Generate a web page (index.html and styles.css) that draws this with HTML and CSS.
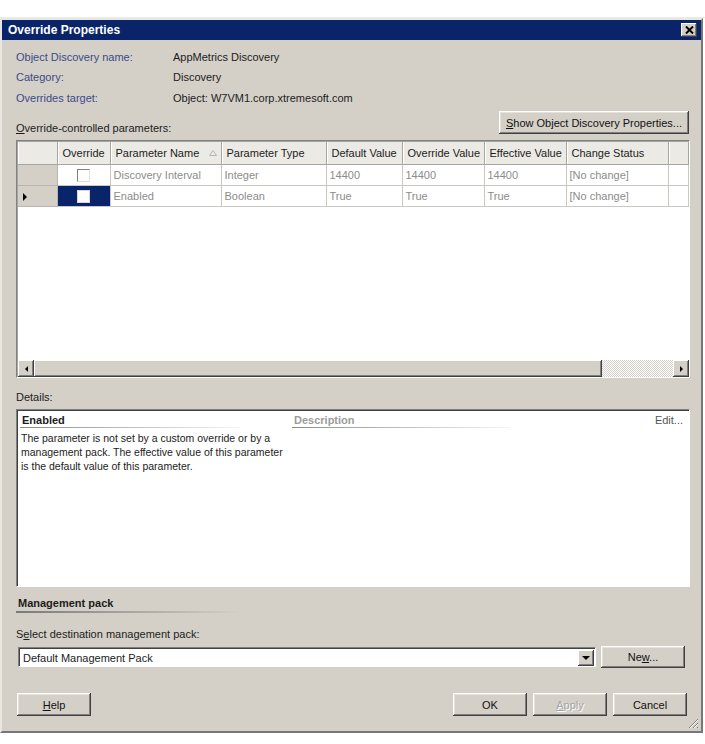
FILE: index.html
```html
<!DOCTYPE html>
<html lang="en">
<head>
  <meta charset="UTF-8" />
  <title>Override Properties</title>
  <link rel="stylesheet" href="styles.css">
</head>
<body>
  <div class="top-strip"></div>

  <div class="dialog">
    <!-- Заголовок окна -->
    <div class="titlebar">
      <span>Override Properties</span>
      <span class="close">
        <svg width="9" height="8" viewBox="0 0 9 8"><path d="M1 0.5 L8 7.5 M8 0.5 L1 7.5" stroke="#000" stroke-width="2"/></svg>
      </span>
    </div>

    <div class="content">
      <div class="info">
        <span class="key">Object Discovery name:</span><span>AppMetrics Discovery</span>
        <span class="key">Category:</span><span>Discovery</span>
        <span class="key">Overrides target:</span><span>Object: W7VM1.corp.xtremesoft.com</span>
      </div>

      <div class="params-bar">
        <span class="label"><u>O</u>verride-controlled parameters:</span>
        <button class="btn btn-wide"><u>S</u>how Object Discovery Properties...</button>
      </div>

      <!-- Таблица параметров -->
      <div class="grid">
        <div class="grid-view">
          <table>
            <colgroup>
              <col class="c-head"><col class="c-ovr"><col class="c-name"><col class="c-type">
              <col class="c-def"><col class="c-oval"><col class="c-eff"><col class="c-stat"><col>
            </colgroup>
            <tr class="hdr">
              <th></th>
              <th class="center">Override</th>
              <th>Parameter Name <svg class="sort" width="8" height="6" viewBox="0 0 8 6"><path d="M0.5 5.5 L4 0.5 L7.5 5.5 Z" fill="none" stroke="#b4b4b4"/></svg></th>
              <th>Parameter Type</th>
              <th>Default Value</th>
              <th>Override Value</th>
              <th>Effective Value</th>
              <th>Change Status</th>
              <th></th>
            </tr>
            <tr>
              <td class="rowhead"></td>
              <td class="center"><span class="check"></span></td>
              <td>Discovery Interval</td>
              <td>Integer</td>
              <td>14400</td>
              <td>14400</td>
              <td>14400</td>
              <td>[No change]</td>
              <td></td>
            </tr>
            <tr>
              <td class="rowhead"><span class="pointer"></span></td>
              <td class="center selected"><span class="check white"></span></td>
              <td>Enabled</td>
              <td>Boolean</td>
              <td>True</td>
              <td>True</td>
              <td>True</td>
              <td>[No change]</td>
              <td></td>
            </tr>
          </table>
        </div>
        <div class="hscroll">
          <span class="sb-btn"><span class="arrow-left"></span></span>
          <span class="sb-thumb"></span>
          <span class="sb-track"></span>
          <span class="sb-btn"><span class="arrow-right"></span></span>
        </div>
      </div>

      <div class="caption details-caption">Details:</div>
      <div class="details">
        <div class="details-head">
          <span class="dh-name">Enabled</span>
          <span class="dh-desc">Description</span>
          <span class="dh-edit">Edit...</span>
        </div>
        <p class="details-text">
          The parameter is not set by a custom override or by a<br>
          management pack. The effective value of this parameter<br>
          is the default value of this parameter.
        </p>
      </div>

      <div class="section-head">Management pack</div>
      <div class="rule"></div>

      <div class="caption pack-caption">S<u>e</u>lect destination management pack:</div>
      <div class="pack-row">
        <div class="combo">
          <span>Default Management Pack</span>
          <span class="combo-btn"><span class="arrow-down"></span></span>
        </div>
        <button class="btn btn-new">Ne<u>w</u>...</button>
      </div>

      <div class="footer">
        <button class="btn"><u>H</u>elp</button>
        <div class="footer-right">
          <button class="btn">OK</button>
          <button class="btn disabled"><u>A</u>pply</button>
          <button class="btn">Cancel</button>
        </div>
      </div>
    </div>

    <svg class="grip" width="11" height="11" viewBox="0 0 11 11">
      <path d="M10 1 L1 10 M10 5 L5 10 M10 9 L9 10" stroke="#808080" stroke-width="1"/>
      <path d="M10 2 L2 10 M10 6 L6 10" stroke="#fff" stroke-width="1"/>
    </svg>
  </div>
</body>
</html>
```

FILE: styles.css
```css
body {
  margin: 0;
  background: #fff;
  font-family: 'Liberation Sans', Arial, sans-serif;
  font-size: 11px;
  color: #1c1c1c;
}

.top-strip {
  height: 17px;
  border-bottom: 1px solid #ecebe8;
}

.dialog {
  position: relative;
  width: 699px;
  background: #d4d0c8;
  border: 2px solid;
  border-color: #e9e7e2 #777 #777 #e9e7e2;
}

.titlebar {
  height: 20px;
  background: #0a246a;
  color: #fff;
  font-size: 12px;
  font-weight: bold;
  display: flex;
  align-items: center;
  justify-content: space-between;
  padding: 0 4px 0 6px;
}

.close {
  width: 16px;
  height: 14px;
  background: #d4d0c8;
  display: flex;
  align-items: center;
  justify-content: center;
  box-shadow: inset -1px -1px #404040, inset 1px 1px #fff, inset -2px -2px #808080;
}

.content {
  padding: 7px 11px 15px 14px;
}

.info {
  display: grid;
  grid-template-columns: 157px 1fr;
  grid-template-rows: 20px 20px 22px;
  align-items: center;
}

.key {
  color: #3a4b88;
}

.params-bar {
  margin-top: 2px;
  display: flex;
  justify-content: space-between;
  align-items: flex-end;
}

.label {
  line-height: 14px;
  margin-bottom: -1px;
}

.btn {
  font: inherit;
  color: #111;
  background: #d4d0c8;
  border: none;
  height: 23px;
  width: 74px;
  padding: 0;
  box-shadow: inset -1px -1px #404040, inset 1px 1px #fff, inset -2px -2px #808080, inset 2px 2px #e4e2dc;
}

.btn-wide {
  width: 190px;
  margin-right: 1px;
}

.btn.disabled {
  color: #a4a4a4;
  text-shadow: 1px 1px #fff;
}

/* таблица */
.grid {
  margin-top: 6px;
  height: 238px;
  box-sizing: border-box;
  border: 1px solid;
  border-color: #808080 #fff #fff #808080;
  box-shadow: inset 1px 1px #a8a6a0;
  padding: 1px 0 0 1px;
  display: flex;
  flex-direction: column;
  background: #fff;
}

.grid-view {
  flex: 1;
  overflow: hidden;
}

table {
  border-collapse: collapse;
  table-layout: fixed;
  width: 671px;
}

.c-head { width: 39px; }
.c-ovr { width: 53px; }
.c-name { width: 111px; }
.c-type { width: 105px; }
.c-def { width: 76px; }
.c-oval { width: 82px; }
.c-eff { width: 82px; }
.c-stat { width: 102px; }

th {
  height: 22px;
  padding: 0 5px;
  font-weight: normal;
  text-align: left;
  white-space: nowrap;
  background: #eceae5;
  border-right: 1px solid #a7a59f;
  border-bottom: 1px solid #a7a59f;
  box-shadow: inset 1px 0 #fff;
}

td {
  height: 20px;
  padding: 0 3px;
  color: #8c8c8c;
  white-space: nowrap;
  border-right: 1px solid #c9c7c1;
  border-bottom: 1px solid #c9c7c1;
}

.center {
  text-align: center;
}

.rowhead {
  background: #d4d0c8;
  border-color: #b8b5ae;
  padding-left: 5px;
}

.selected {
  background: #0a246a;
}

.sort {
  margin-left: 7px;
  vertical-align: 1px;
}

.check {
  display: inline-block;
  width: 11px;
  height: 11px;
  vertical-align: middle;
  background: #fff;
  border: 1px solid;
  border-color: #808080 #e0e0e0 #e0e0e0 #808080;
}

.check.white {
  border-color: #d8d8d8;
}

.pointer {
  display: inline-block;
  border-left: 4px solid #000;
  border-top: 4px solid transparent;
  border-bottom: 4px solid transparent;
  vertical-align: middle;
}

.hscroll {
  height: 17px;
  display: flex;
}

.sb-btn {
  width: 16px;
  background: #d4d0c8;
  display: flex;
  align-items: center;
  justify-content: center;
  box-shadow: inset -1px -1px #404040, inset 1px 1px #fff, inset -2px -2px #808080;
}

.sb-thumb {
  width: 568px;
  background: #d4d0c8;
  box-shadow: inset -1px -1px #404040, inset 1px 1px #fff, inset -2px -2px #808080;
}

.sb-track {
  flex: 1;
  background: repeating-conic-gradient(#fff 0 25%, #d4d0c8 0 50%) 0 0 / 2px 2px;
}

.arrow-left {
  border-right: 3px solid #000;
  border-top: 3px solid transparent;
  border-bottom: 3px solid transparent;
}

.arrow-right {
  border-left: 3px solid #000;
  border-top: 3px solid transparent;
  border-bottom: 3px solid transparent;
}

.arrow-down {
  border-top: 4px solid #000;
  border-left: 4px solid transparent;
  border-right: 4px solid transparent;
}

.caption {
  line-height: 14px;
}

.details-caption {
  margin-top: 12px;
}

/* детали */
.details {
  margin-top: 5px;
  height: 178px;
  box-sizing: border-box;
  background: #fff;
  border: 1px solid;
  border-color: #808080 #fff #fff #808080;
  box-shadow: inset 1px 1px #404040;
  padding: 3px 6px 0 3px;
}

.details-head {
  display: flex;
  line-height: 14px;
  font-weight: bold;
}

.dh-name,
.dh-desc {
  padding: 0 2px 1px;
  background: linear-gradient(to right, #8a8a8a, #f4f4f4) bottom / 100% 1px no-repeat;
}

.dh-name {
  width: 216px;
}

.dh-desc {
  margin-left: 52px;
  width: 214px;
  color: #9c9c9c;
}

.dh-edit {
  margin-left: auto;
  font-weight: normal;
  color: #555;
}

.details-text {
  margin: 3px 0 0 1px;
  line-height: 14px;
  font-size: 10.5px;
}

.section-head {
  margin-top: 9px;
  padding-left: 2px;
  line-height: 14px;
  font-weight: bold;
}

.rule {
  width: 224px;
  height: 2px;
  margin-top: 1px;
  background: linear-gradient(to right, #7a7a7a, #d4d0c8);
}

.pack-caption {
  margin-top: 14px;
}

.pack-row {
  margin-top: 5px;
  display: flex;
  align-items: center;
  gap: 5px;
}

.combo {
  margin-left: 2px;
  width: 578px;
  height: 20px;
  box-sizing: border-box;
  background: #fff;
  border: 1px solid;
  border-color: #808080 #fff #fff #808080;
  box-shadow: inset 1px 1px #404040;
  display: flex;
  align-items: center;
  justify-content: space-between;
  padding: 2px 1px 1px 4px;
}

.combo-btn {
  width: 16px;
  height: 16px;
  background: #d4d0c8;
  display: flex;
  align-items: center;
  justify-content: center;
  box-shadow: inset -1px -1px #404040, inset 1px 1px #fff, inset -2px -2px #808080;
}

.btn-new {
  width: 84px;
  height: 22px;
}

.footer {
  margin-top: 25px;
  display: flex;
}

.footer > .btn {
  margin-left: 1px;
}

.footer-right {
  margin-left: auto;
  margin-right: 3px;
  display: flex;
  gap: 6px;
}

.grip {
  position: absolute;
  right: 2px;
  bottom: 2px;
}
```
